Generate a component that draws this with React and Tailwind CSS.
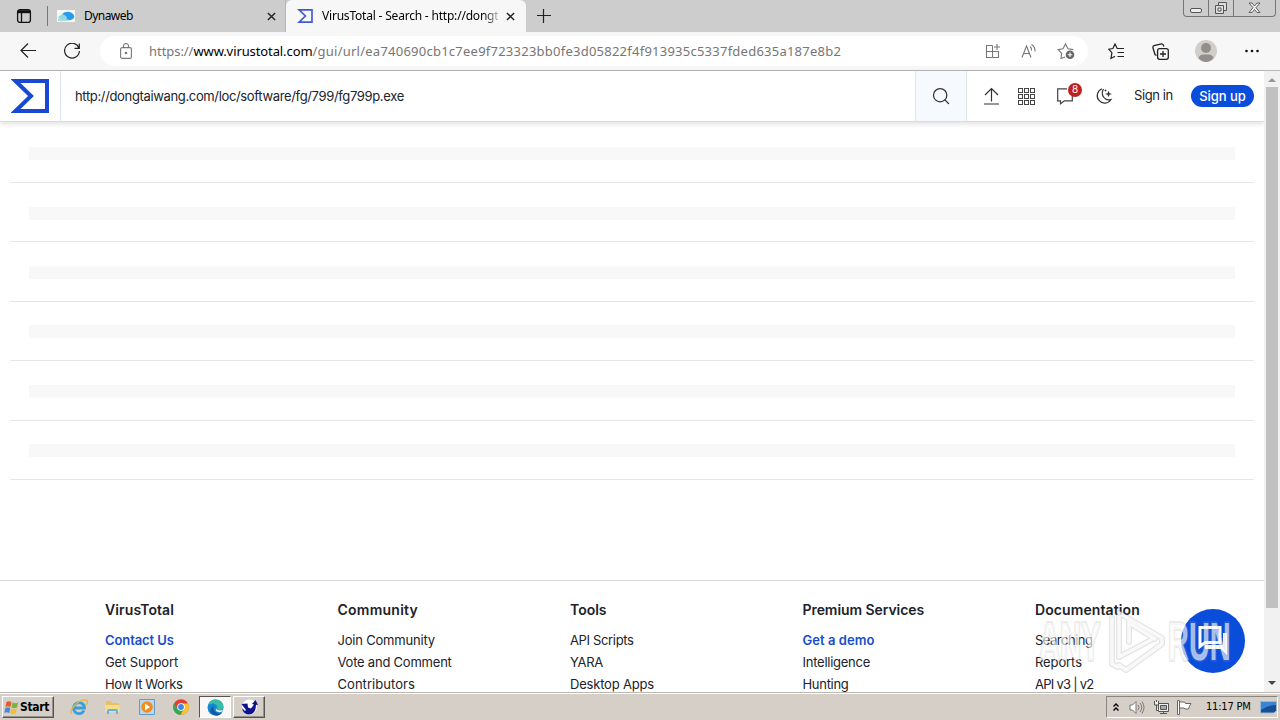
import { LuSearch } from 'react-icons/lu';

const skeletonRows = [1, 2, 3, 4, 5, 6];

const footerColumns = [
    {
        title: 'VirusTotal',
        titleClass: 'tracking-[0.1px]',
        links: [
            { label: 'Contact Us', highlight: true, spacing: 'tracking-[-0.1px]' },
            { label: 'Get Support', spacing: 'tracking-[-0.1px]' },
            { label: 'How It Works', spacing: 'tracking-[-0.4px]' }
        ]
    },
    {
        title: 'Community',
        titleClass: 'tracking-[0.25px]',
        links: [
            { label: 'Join Community', spacing: 'tracking-[-0.2px]' },
            { label: 'Vote and Comment', spacing: 'tracking-[-0.22px]' },
            { label: 'Contributors', spacing: 'tracking-[0.05px]' }
        ]
    },
    {
        title: 'Tools',
        titleClass: 'tracking-[0px]',
        links: [
            { label: 'API Scripts', spacing: 'tracking-[-0.35px]' },
            { label: 'YARA', spacing: 'tracking-[-0.3px]' },
            { label: 'Desktop Apps', spacing: 'tracking-[-0.2px]' }
        ]
    },
    {
        title: 'Premium Services',
        titleClass: 'tracking-[-0.07px]',
        links: [
            { label: 'Get a demo', highlight: true, spacing: 'tracking-[0.05px]' },
            { label: 'Intelligence', spacing: 'tracking-[-0.25px]' },
            { label: 'Hunting', spacing: 'tracking-[-0.3px]' }
        ]
    },
    {
        title: 'Documentation',
        titleClass: 'tracking-[0.1px]',
        links: [
            { label: 'Searching', spacing: 'tracking-[-0.5px]' },
            { label: 'Reports', spacing: 'tracking-[-0.1px]' },
            { label: 'API v3 | v2', spacing: 'tracking-[-0.75px]' }
        ]
    }
];

const Sigma = ({ className, thick = 3 }) => (
    <svg className={className} viewBox="0 0 38 34" fill="none" stroke="currentColor" strokeWidth={thick}>
        <path d="M4.500 2h31.500v30H4.500L20 17z" />
    </svg>
);

const CloseX = ({ className }) => (
    <svg className={className} viewBox="0 0 10 10" fill="none" stroke="#222" strokeWidth="1.600">
        <path d="M1 1l8 8M9 1L1 9" />
    </svg>
);

const WindowButtons = () => (
    <div className="flex h-[17px] w-[93px] shrink-0 rounded-b border border-t-0 border-[#777] text-[#555]">
        <svg className="h-4 w-[25px] border-r border-[#777]" viewBox="0 0 24 16" fill="#eee" stroke="currentColor">
            <rect x="6.500" y="8.500" width="11" height="4" rx="1.500" />
        </svg>
        <svg className="h-4 w-[25px] border-r border-[#777]" viewBox="0 0 24 16" fill="#ddd" stroke="currentColor">
            <path d="M9.500 2.500h8v8h-8z" />
            <path d="M6.500 5.500h8v8h-8z" />
            <path d="M9 8h3v3H9z" fill="#eee" />
        </svg>
        <svg className="h-4 flex-1" viewBox="0 0 41 16" fill="#eee" stroke="currentColor" strokeWidth=".9">
            <path d="M15 3h3l2.500 3L23 3h3l-4 4.700L26 12.500h-3l-2.500-3-2.500 3h-3l4-4.800z" />
        </svg>
    </div>
);

const TabStrip = () => (
    <div className="flex h-8 shrink-0 bg-[#cdcdcd] font-['Noto_Sans'] text-xs text-black">
        <div className="flex w-[47px] items-center pl-4">
            <svg className="h-4 w-4" viewBox="0 0 16 16" fill="none" stroke="#111" strokeWidth="1.300">
                <rect x="1.600" y="1.600" width="12.800" height="12.800" rx="2.500" />
                <path d="M5.500 5v9" />
                <path d="M2 3.700h12" strokeWidth="3" />
            </svg>
        </div>
        <div className="mt-[6px] h-5 w-px bg-[#777]" />
        <div className="flex w-[238px] items-center border-r border-[#b5b5b5] pl-[9px]">
            <svg className="h-3 w-[18px]" viewBox="0 0 18 12">
                <path d="M0 0h18v12H0z" fill="#f4f8f3" />
                <path d="M1 7q3-3 7-3l4 3-5 3q-4 0-6-3z" fill="#8fd6ea" />
                <path d="M5 4q5-4 10-1 4 3 1 6-3 2-8 1 5-3-3-6z" fill="#2a9bea" />
                <path d="M1 8.500q5 2 11 .5-3 3-11 2z" fill="#a9dfcf" />
            </svg>
            <span className="ml-[9px] flex-1 tracking-[-0.550px]">Dynaweb</span>
            <CloseX className="mr-[9px] h-[9px] w-[9px]" />
        </div>
        <div className="flex w-[240px] items-center rounded-t-md bg-[#f7f7f7] pl-[11px]">
            <Sigma className="h-[14px] w-4 text-[#3f59d4]" thick={4} />
            <span className="ml-[9px] w-[176px] bg-linear-to-r from-black from-90% to-[#bbb] bg-clip-text whitespace-nowrap tracking-[-0.200px] text-transparent">
                VirusTotal - Search - http://dongt
            </span>
            <CloseX className="ml-2 h-[9px] w-[9px]" />
        </div>
        <div className="flex flex-1 items-center pl-[11px]">
            <svg className="h-[14px] w-[14px]" viewBox="0 0 14 14" stroke="#222" strokeWidth="1.200">
                <path d="M6.500 0v14M0 6.500h14" />
            </svg>
        </div>
        <WindowButtons />
        <div className="w-1" />
    </div>
);

const Toolbar = () => (
    <div className="flex h-[39px] shrink-0 items-center border-b border-[#b7b7b7] bg-[#f7f7f7]">
        <svg className="ml-5 h-4 w-4" viewBox="0 0 16 16" fill="none" stroke="#222" strokeWidth="1.200">
            <path d="M16 7.500H1M8 .5l-7 7 7 7" />
        </svg>
        <svg className="ml-7 h-4 w-4" viewBox="0 0 16 16" fill="none" stroke="#222" strokeWidth="1.200">
            <path d="M15 5.200A7.400 7.400 0 1 0 15.400 8M15.300.5v4.800h-4.800" />
        </svg>
        <div className="ml-5 flex h-[30px] w-[988px] items-center rounded-full bg-white pl-5 text-[#777]">
            <svg className="h-4 w-3" viewBox="0 0 12 16" fill="none" stroke="currentColor" strokeWidth="1.100">
                <rect x=".6" y="4.600" width="10.800" height="10.800" rx="1.500" />
                <path d="M3.500 4.500V3a2.500 2.500 0 0 1 5 0v1.500" />
                <circle cx="6" cy="10" r=".8" fill="currentColor" />
            </svg>
            <div className="ml-[17px] flex-1 pt-px font-['Noto_Sans'] text-[13px] whitespace-nowrap text-[#767676]">
                <span className="tracking-[-0.050px]">https://</span>
                <span className="tracking-[-0.100px] text-black">www.virustotal.com</span>
                <span className="tracking-[0.240px]">/gui/url/ea740690cb1c7ee9f723323bb0fe3d05822f4f913935c5337fded635a187e8b2</span>
            </div>
            <svg className="h-4 w-4" viewBox="0 0 16 16" fill="none" stroke="currentColor" strokeWidth="1.100">
                <path d="M7.500 2.500h-6v12h12v-6h-12M7.500 2.500v12M12 1v6M9 4h6" />
            </svg>
            <svg className="ml-5 h-4 w-4" viewBox="0 0 16 16" fill="none" stroke="currentColor" strokeWidth="1.100">
                <path d="M1 14.500L5.500 3 10 14.500M2.500 10.500h6M9 3.500q2 1.500 1.500 4M10.500 1.500q4 2.500 3.500 7" />
            </svg>
            <svg className="mr-[13px] ml-5 h-[18px] w-[18px]" viewBox="0 0 18 18" fill="none" stroke="currentColor" strokeWidth="1.100">
                <path d="M8 15l-4 1.500.6-5.200L1 7.600l5-.9L8.500 2 11 6.700l5.300.9" />
                <circle cx="13" cy="12.700" r="4.300" fill="#666" stroke="none" />
                <path d="M13 10.500v4.400M10.800 12.700h4.400" stroke="#fff" />
            </svg>
        </div>
        <svg className="ml-5 h-[17px] w-[17px]" viewBox="0 0 17 17" fill="none" stroke="#222" strokeWidth="1.200">
            <path d="M11 5.500H9.200L7 1 4.900 5.500.7 6.200l3.200 3.500L3 15.500l4-2.200M10.500 5.500H16M9.500 9.500H16M9.500 13.500H16" />
        </svg>
        <svg className="ml-[27px] h-[17px] w-[17px]" viewBox="0 0 17 17" fill="none" stroke="#222" strokeWidth="1.300">
            <rect x="5.600" y="5.600" width="10.700" height="10.700" rx="2" />
            <path d="M11 8v6M8 11h6M4.500 12.500L3 11.500 1 5q-.5-1.700 1-2.500L9.500.8Q11 .6 12 3.500" />
        </svg>
        <svg className="ml-[26px] h-[22px] w-[22px]" viewBox="0 0 22 22">
            <circle cx="11" cy="11" r="11" fill="#d0cdca" />
            <circle cx="11" cy="8" r="5" fill="#918e8b" />
            <path d="M3.500 18q1-3.500 5-3.500h5q4 0 5 3.500-3.500 4-7.500 4T3.500 18z" fill="#918e8b" />
        </svg>
        <svg className="ml-[28px] h-1 w-[14px]" viewBox="0 0 14 4" fill="#111">
            <circle cx="1.500" cy="2" r="1.300" />
            <circle cx="7" cy="2" r="1.300" />
            <circle cx="12.500" cy="2" r="1.300" />
        </svg>
    </div>
);

const SiteHeader = () => (
    <header className="flex h-[51px] shrink-0 items-center border-b border-[#d9dbe0] bg-white text-[13px] text-[#20232b] shadow-[0_2px_5px_rgba(0,0,0,0.12)]">
        <div className="flex h-full w-[61px] items-center border-r border-[#dfe5ec] pl-[11px]">
            <Sigma className="h-[34px] w-[38px] text-[#1749d4]" thick={4} />
        </div>
        <div className="flex-1 pt-[2px] pl-[14px] tracking-[-0.350px]">
            http://dongtaiwang.com/loc/software/fg/799/fg799p.exe
        </div>
        <div className="flex h-full w-[52px] items-center justify-center border-x border-[#dfe5ec] bg-[#f6f9fd] pr-px">
            <LuSearch className="h-5 w-5 text-[#333]" strokeWidth={1.500} />
        </div>
        <svg className="ml-4 h-[18px] w-[17px]" viewBox="0 0 17 18" fill="none" stroke="#333" strokeWidth="1.200">
            <path d="M8.500 14.500V1.500M2 8l6.500-6.500L15 8M1 17h15" />
        </svg>
        <svg className="ml-[18px] h-[17px] w-[17px]" viewBox="0 0 17 17" fill="none" stroke="#444">
            {[0.5, 6.5, 12.5].map((y) => [0.5, 6.5, 12.5].map((x) => (
                <rect key={`${x}-${y}`} x={x} y={y} width="4" height="4" />
            )))}
        </svg>
        <div className="relative ml-[22px] h-[17px] w-4">
            <svg className="h-[17px] w-4" viewBox="0 0 16 17" fill="none" stroke="#444" strokeWidth="1.200">
                <path d="M10 .8H.7v12H3.500v3l4-3h7.800V7" />
            </svg>
            <span className="absolute -top-[5px] left-[11px] flex h-[14px] w-[14px] items-center justify-center rounded-full bg-[#c2201f] text-[10px] text-white">8</span>
        </div>
        <svg className="ml-[22px] h-[18px] w-[18px]" viewBox="0 0 18 18" fill="none" stroke="#333" strokeWidth="1.200">
            <path d="M7 1.800A7.400 7.400 0 1 0 16 12.500C10 14.500 5 8 8.500 2" />
            <path d="M13.500 4l.8 2.200 2.200.8-2.200.8-.8 2.200-.8-2.200-2.200-.8 2.200-.8z" fill="#333" strokeWidth=".2" />
            <path d="M10.500 2.500v2M9.500 3.500h2" strokeWidth=".8" />
        </svg>
        <span className="ml-[21px] w-[57px] tracking-[-0.400px] whitespace-nowrap">Sign in</span>
        <span className="mr-[10px] flex h-[22px] w-[63px] items-center justify-center rounded-full bg-[#0b4ddb] pt-px font-medium tracking-[-0.050px] whitespace-nowrap text-white">Sign up</span>
    </header>
);

const Footer = () => (
    <footer className="flex h-[112px] shrink-0 overflow-hidden border-t border-[#dcdcdc] pl-[105px] text-[13px] text-[#20222a]">
        {footerColumns.map((column) => (
            <div key={column.title} className="w-[232.500px] shrink-0 pt-[18.500px]">
                <h4 className={`mb-[9.500px] text-[14px] leading-[20px] font-semibold ${column.titleClass}`}>{column.title}</h4>
                {column.links.map((link) => (
                    <div
                        key={link.label}
                        className={`leading-[22px] ${link.spacing} ${link.highlight ? 'font-semibold text-[#174dcb]' : ''}`}
                    >
                        {link.label}
                    </div>
                ))}
            </div>
        ))}
    </footer>
);

const Scrollbar = () => (
    <div className="flex w-4 shrink-0 flex-col items-center bg-[#f1f1f1]">
        <svg className="h-4 w-4" viewBox="0 0 16 16" fill="#999"><path d="M4 11l4-4 4 4z" /></svg>
        <div className="h-[521px] w-3 bg-[#c1c1c1]" />
        <div className="flex-1" />
        <svg className="h-[17px] w-4" viewBox="0 0 16 17" fill="#444"><path d="M4 6h8l-4 4z" /></svg>
    </div>
);

const Watermark = () => (
    <svg className="absolute top-[604px] left-[1034px] h-[74px] w-[204px]" viewBox="0 0 204 74">
        <g fill="#fff" fillOpacity=".65" stroke="#999" strokeOpacity=".2" strokeWidth="4" paintOrder="stroke" strokeLinejoin="round" fontFamily="Liberation Sans" fontWeight="bold" fontSize="53">
            <text transform="translate(5 56) scale(.57 1)" textLength="108" lengthAdjust="spacingAndGlyphs">ANY</text>
            <text transform="translate(134 56) scale(.57 1)" textLength="110" lengthAdjust="spacingAndGlyphs">RUN</text>
        </g>
        <g fill="none" strokeLinejoin="round" strokeLinecap="round">
            <path d="M78 14v46l6 3M85 9v44l32-17M85 9l43 25v6L92 66l-7-5M95 16v22M97 20l24 15" stroke="#888" strokeOpacity=".22" strokeWidth="6" />
            <path d="M78 14v46l6 3M85 9v44l32-17M85 9l43 25v6L92 66l-7-5M95 16v22M97 20l24 15" stroke="#fff" strokeOpacity=".75" strokeWidth="3.500" />
        </g>
    </svg>
);

const ChatButton = () => (
    <div className="absolute top-[609px] left-[1181px] flex h-16 w-16 items-center justify-center rounded-full bg-[#0b4ddb]">
        <svg className="h-8 w-8" viewBox="0 0 32 32" fill="none" stroke="#fff" strokeWidth="3">
            <path d="M3 2.500h20v15H8l-5 4z" />
            <path d="M26 8h4v22l-6-6H8v-4h18z" fill="#fff" stroke="none" />
        </svg>
    </div>
);

const Taskbar = () => (
    <div className="flex h-7 shrink-0 items-center border-t border-[#bbb8b3] bg-[#d5cfc8] pt-px font-['DejaVu_Sans_Condensed'] text-[11px] text-black shadow-[inset_0_1px_0_#fff]">
        <div className="ml-[2px] flex h-[22px] w-[52px] items-center border border-t-white border-r-[#555] border-b-[#555] border-l-white pl-px shadow-[inset_-1px_-1px_0_#96918b]">
            <svg className="h-[15px] w-[15px] shrink-0" viewBox="0 0 15 15">
                <path d="M2.500 2q2.500-1.500 5 0L6.500 7q-2.500-1.500-5 0z" fill="#e35c2f" />
                <path d="M8.500 2.500q3 1.500 5.500 0L13 7.500q-3 1.500-5.500 0z" fill="#77b440" />
                <path d="M1.300 8q2.500-1.500 5 0l-1 5q-2.500-1.500-5 0z" fill="#438bd3" />
                <path d="M7.300 8.500q3 1.500 5.500 0l-1 5q-3 1.500-5.500 0z" fill="#f5bd31" />
            </svg>
            <span className="ml-px text-[12px] leading-none font-bold tracking-[-0.350px]">Start</span>
        </div>
        <svg className="ml-4 h-[17px] w-[18px]" viewBox="0 0 18 17" fill="none">
            <path d="M14 11.500A5.500 5.500 0 1 1 14.500 9H4.500" stroke="#3b9edc" strokeWidth="2.800" />
            <path d="M2 15Q-1 12 5 6t11-5q3 1 0 5" stroke="#e2b83c" strokeWidth="1.300" />
        </svg>
        <svg className="ml-4 h-[17px] w-[17px]" viewBox="0 0 17 17">
            <path d="M2 2h5l1 2h7v8H2z" fill="#e6c261" />
            <path d="M1 6h14l1 7H1z" fill="#f4dd91" />
            <path d="M3 15v-3q0-2 2-2h7q2 0 2 2v3h-2v-3H5v3z" fill="#63b4dc" />
        </svg>
        <svg className="ml-[18px] h-4 w-4" viewBox="0 0 16 16">
            <path d="M.5.5h15v15H.5z" fill="#b9d8ef" stroke="#5e9dca" />
            <circle cx="8" cy="8" r="5.800" fill="#f28b20" />
            <path d="M6 4.500l5 3.500-5 3.500z" fill="#fff" />
        </svg>
        <svg className="ml-[18px] h-4 w-4" viewBox="0 0 16 16">
            <circle cx="8" cy="8" r="7.800" fill="#e23e31" />
            <path d="M1 4.500A7.800 7.800 0 0 0 7.500 15.800L11 10H5z" fill="#35a852" />
            <path d="M8 4.500h7a7.800 7.800 0 0 1-7.500 11.300L11.500 9z" fill="#f5c927" />
            <circle cx="8" cy="8" r="3.800" fill="#fff" />
            <circle cx="8" cy="8" r="2.900" fill="#4384e6" />
        </svg>
        <div className="ml-[10px] flex h-[22px] w-8 items-center justify-center border border-t-[#555] border-r-white border-b-white border-l-[#555] bg-[#f9f8f6]">
            <svg className="h-[17px] w-[17px]" viewBox="0 0 17 17">
                <circle cx="8.500" cy="8.500" r="8" fill="#1688cf" />
                <path d="M1 6Q4 0 9 .5q7 .5 7.500 7 0 4-5 3.500-2 0-1-2Q10 5 6.500 4.500 3 4.300 1 6z" fill="#37bda8" />
                <path d="M7 7q-2 5 3 7 3 1 5.500-1-5 7-11.500 1-2-4 3-7z" fill="#1457a6" />
                <path d="M9 8.500q0 4 7.500 2.500L14 13q-6 1-5-4.500z" fill="#f9f8f6" />
            </svg>
        </div>
        <div className="ml-[2px] flex h-[22px] w-8 items-center justify-center border border-t-white border-r-[#555] border-b-[#555] border-l-white shadow-[inset_-1px_-1px_0_#96918b]">
            <svg className="h-4 w-[17px]" viewBox="0 0 17 16">
                <circle cx="8.500" cy="8" r="7.500" fill="#fff" />
                <path d="M.5 5l6-.5.5 4 3 1 3-4-2-.5 3.500-4 2.500 5-2-.2Q15 15 8 15.500 2 15 1 9l3 3 1-1z" fill="#11128e" />
            </svg>
        </div>
        <div className="flex-1" />
        <div className="mr-[2px] flex h-[22px] w-[172px] items-center border border-t-[#8a8580] border-r-white border-b-white border-l-[#8a8580] pl-[6px]">
            <svg className="h-[9px] w-[6px]" viewBox="0 0 6 9" fill="none" stroke="#000" strokeWidth="1.400">
                <path d="M.5 3.500L3 1l2.500 2.500M.5 7.500L3 5l2.500 2.500" />
            </svg>
            <svg className="ml-[10px] h-[15px] w-4" viewBox="0 0 16 15" fill="#fff" stroke="#777">
                <path d="M1 5h2.500L7 1.500v12L3.500 10H1z" />
                <path d="M9 5q2 2.500 0 5M11 3q3.500 4.500 0 9M13 1.500q4 6 0 12" fill="none" />
            </svg>
            <svg className="ml-[8px] h-[15px] w-4" viewBox="0 0 16 15" fill="#eee" stroke="#555">
                <path d="M5.500 3.500h10v8h-10zM7 13.500h7M10.500 11.500v2" />
                <path d="M7.500 5.500h6v4h-6z" fill="#aaa" />
                <path d="M1.500 1v4h4V1M3.500 0v2M3.500 5v5.500h2" />
            </svg>
            <svg className="ml-[8px] h-[15px] w-[15px]" viewBox="0 0 15 15" fill="#fff" stroke="#666">
                <path d="M.5.5h2v14h-2zM2.500 2h5l1 1.500h5.500L12.500 6l-1 3H8L7 8H2.500z" />
            </svg>
            <span className="ml-[14px] w-[52px] tracking-[-0.200px] whitespace-nowrap">11:17 PM</span>
            <svg className="ml-auto h-[14px] w-[17px]" viewBox="0 0 17 14">
                <path d="M.5 1.500h16v9L14 13H.5z" fill="#174e96" stroke="#9bb9d4" />
                <path d="M1 2h15v3Q8 5 1 10z" fill="#3985d4" />
            </svg>
        </div>
    </div>
);

const App = () => (
    <div className="relative flex h-[720px] w-[1280px] flex-col overflow-hidden bg-white font-['Inter']">
        <TabStrip />
        <Toolbar />
        <div className="flex h-[621px] shrink-0">
            <div className="flex w-[1264px] flex-col">
                <SiteHeader />
                <main className="flex-1 px-[10px] pt-[1.400px]">
                    {skeletonRows.map((row) => (
                        <div key={row} className="flex h-[59.450px] items-center border-b border-[#e6e6e8] px-[19px]">
                            <div className="mt-[2px] h-[13px] flex-1 bg-[#f8f8f8]" />
                        </div>
                    ))}
                </main>
                <Footer />
            </div>
            <Scrollbar />
        </div>
        <Taskbar />
        <ChatButton />
        <Watermark />
    </div>
);

export default App;
